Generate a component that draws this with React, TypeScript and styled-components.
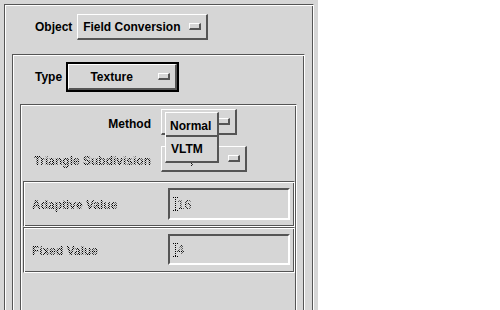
import React from 'react';
import styled, { createGlobalStyle, css } from 'styled-components';

const GRAY = '#d6d6d6';
const DARK = '#555555';

const GlobalStyle = createGlobalStyle`
  html, body {
    margin: 0;
    padding: 0;
    background: #ffffff;
  }
  body {
    font-family: "Liberation Sans", Arial, Helvetica, sans-serif;
    font-size: 12px;
    font-weight: 700;
    color: #000;
  }
`;

// 50% stipple used by Motif for insensitive widgets
const stipple = css`
  -webkit-mask-image: conic-gradient(#000 0 25%, transparent 0 50%, #000 0 75%, transparent 0);
  mask-image: conic-gradient(#000 0 25%, transparent 0 50%, #000 0 75%, transparent 0);
  -webkit-mask-size: 2px 2px;
  mask-size: 2px 2px;
`;

const Window = styled.div`
  box-sizing: border-box;
  width: 318px;
  height: 310px;
  padding: 4px 0 0 4px;
  background: ${GRAY};
  overflow: hidden;
`;

const Frame = styled.div<{ $w: number; $h?: number }>`
  box-sizing: border-box;
  position: relative;
  width: ${(p) => p.$w}px;
  height: ${(p) => (p.$h ? `${p.$h}px` : '420px')};
  border: 1px solid;
  border-color: ${DARK} #fff #fff ${DARK};
  box-shadow: inset 1px 1px 0 #fff, inset -1px -1px 0 ${DARK};
`;

const OuterFrame = styled(Frame)``;

const ObjectFrame = styled(Frame)`
  margin: 14px 0 0 7px;
`;

const MethodFrame = styled(Frame)`
  margin: 12px 0 0 7px;
`;

const ValueFrame = styled(Frame)<{ $top?: number }>`
  margin: ${(p) => p.$top ?? 0}px 0 0 2px;
  display: flex;
  align-items: flex-start;
  padding: 6px 0 0 8px;
`;

const Row = styled.div<{ $top: number; $left: number; $gap: number }>`
  display: flex;
  align-items: center;
  gap: ${(p) => p.$gap}px;
  margin: ${(p) => p.$top}px 0 0 ${(p) => p.$left}px;
`;

const Label = styled.span<{ $off?: boolean }>`
  white-space: nowrap;
  line-height: 14px;
  ${(p) => p.$off && stipple}
`;

const Grid = styled.div`
  display: grid;
  grid-template-columns: 130px auto;
  column-gap: 10px;
  row-gap: 11px;
  align-items: center;
  margin-top: 4px;
  justify-items: start;
  & > span {
    justify-self: end;
    margin-top: 3px;
  }
`;

const OptionButton = styled.div<{ $w: number; $h?: number }>`
  box-sizing: border-box;
  position: relative;
  display: flex;
  align-items: center;
  width: ${(p) => p.$w}px;
  height: ${(p) => p.$h ?? 26}px;
  background: ${GRAY};
  border-style: solid;
  border-width: 1px 2px 2px 1px;
  border-color: #fff ${DARK} ${DARK} #fff;
  padding-right: 5px;
`;

const ButtonText = styled.span<{ $off?: boolean }>`
  flex: 1;
  text-align: center;
  white-space: nowrap;
  padding-top: 1px;
  min-height: 14px;
  ${(p) => p.$off && stipple}
`;

const Indicator = styled.span`
  box-sizing: border-box;
  width: 12px;
  height: 7px;
  margin-left: 4px;
  border-style: solid;
  border-width: 1px 2px 2px 1px;
  border-color: #fff ${DARK} ${DARK} #fff;
`;

const Focus = styled.div`
  box-sizing: border-box;
  width: 113px;
  height: 30px;
  border: 2px solid #000;
  display: flex;
`;

const Menu = styled.div`
  position: absolute;
  left: 3px;
  top: 2px;
  box-sizing: border-box;
  width: 54px;
  background: ${GRAY};
  border-style: solid;
  border-width: 1px 2px 2px 1px;
  border-color: #fff ${DARK} ${DARK} #fff;
  z-index: 2;
`;

const MenuItem = styled.div<{ $armed?: boolean }>`
  box-sizing: border-box;
  height: ${(p) => (p.$armed ? 24 : 24)}px;
  padding: ${(p) => (p.$armed ? '6px 0 0 4px' : '5px 0 0 5px')};
  line-height: 14px;
  ${(p) =>
    p.$armed &&
    css`
      border-bottom: 2px solid ${DARK};
    `}
`;

const ValueLabel = styled(Label)`
  width: 136px;
  margin-top: 10px;
`;

const TextField = styled.div<{ $h: number }>`
  box-sizing: border-box;
  display: flex;
  align-items: center;
  width: 122px;
  height: ${(p) => p.$h}px;
  border: 2px solid;
  border-color: ${DARK} #fff #fff ${DARK};
  padding-left: 3px;
`;

const FieldText = styled.span`
  font-weight: 400;
  font-size: 13px;
  margin-left: -1px;
  ${stipple}
`;

const IBeam = () => (
  <svg width="5" height="14" viewBox="0 0 5 14" style={{ display: 'block' }}>
    <path d="M0 0.5h5M2.5 0v14M0 13.5h5" stroke="#000" strokeWidth="1" strokeDasharray="1 1" fill="none" />
  </svg>
);

const ValueRow = ({ label, value, h }: { label: string; value: string; h: number }) => (
  <>
    <ValueLabel $off>{label}</ValueLabel>
    <TextField $h={h}>
      <IBeam />
      <FieldText>{value}</FieldText>
    </TextField>
  </>
);

export default function App() {
  return (
    <>
      <GlobalStyle />
      <Window>
        <OuterFrame $w={310}>
          <Row $top={9} $left={30} $gap={5}>
            <Label>Object</Label>
            <OptionButton $w={131}>
              <ButtonText>Field Conversion</ButtonText>
              <Indicator />
            </OptionButton>
          </Row>

          <ObjectFrame $w={293}>
            <Row $top={7} $left={22} $gap={4}>
              <Label>Type</Label>
              <Focus>
                <OptionButton $w={109} $h={26}>
                  <ButtonText>Texture</ButtonText>
                  <Indicator />
                </OptionButton>
              </Focus>
            </Row>

            <MethodFrame $w={277}>
              <Grid>
                <Label>Method</Label>
                <OptionButton $w={76}>
                  {/* the selected value is covered by the open menu */}
                  <ButtonText />
                  <Indicator />
                  <Menu>
                    <MenuItem $armed>Normal</MenuItem>
                    <MenuItem>VLTM</MenuItem>
                  </Menu>
                </OptionButton>
                <Label $off>Triangle Subdivision</Label>
                <OptionButton $w={86}>
                  <ButtonText $off>Adaptive</ButtonText>
                  <Indicator />
                </OptionButton>
              </Grid>

              <ValueFrame $w={272} $h={46} $top={9}>
                <ValueRow label="Adaptive Value" value="16" h={32} />
              </ValueFrame>
              <ValueFrame $w={272} $h={46}>
                <ValueRow label="Fixed Value" value="4" h={31} />
              </ValueFrame>
            </MethodFrame>
          </ObjectFrame>
        </OuterFrame>
      </Window>
    </>
  );
}
